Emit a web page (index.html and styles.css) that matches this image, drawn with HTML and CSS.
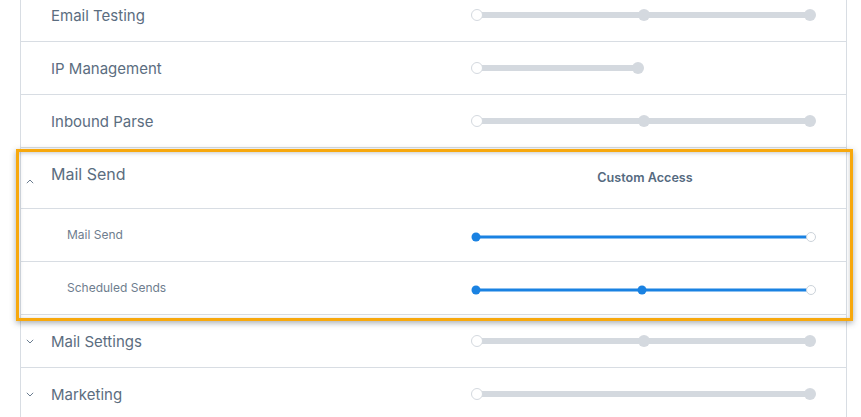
FILE: index.html
```html
<!DOCTYPE html>
<html>
<head>
<meta charset="utf-8">
<link rel="stylesheet" href="styles.css">
</head>
<body>
<div class="table">
  <div class="row">
    <span class="chev"></span>
    <span class="label">Email Testing</span>
    <svg class="slider" width="350" height="14" viewBox="0 0 350 14">
      <rect x="7" y="4" width="333" height="6" fill="#d4d9df"/>
      <circle cx="7" cy="7" r="5.5" fill="#fff" stroke="#d4d9df"/>
      <circle cx="174" cy="7" r="6" fill="#d4d9df"/>
      <circle cx="340" cy="7" r="6" fill="#d4d9df"/>
    </svg>
  </div>
  <div class="row">
    <span class="chev"></span>
    <span class="label">IP Management</span>
    <svg class="slider" width="350" height="14" viewBox="0 0 350 14">
      <rect x="7" y="4" width="161" height="6" fill="#d4d9df"/>
      <circle cx="7" cy="7" r="5.5" fill="#fff" stroke="#d4d9df"/>
      <circle cx="168" cy="7" r="6" fill="#d4d9df"/>
    </svg>
  </div>
  <div class="row">
    <span class="chev"></span>
    <span class="label">Inbound Parse</span>
    <svg class="slider" width="350" height="14" viewBox="0 0 350 14">
      <rect x="7" y="4" width="333" height="6" fill="#d4d9df"/>
      <circle cx="7" cy="7" r="5.5" fill="#fff" stroke="#d4d9df"/>
      <circle cx="174" cy="7" r="6" fill="#d4d9df"/>
      <circle cx="340" cy="7" r="6" fill="#d4d9df"/>
    </svg>
  </div>
  <div class="group">
    <div class="row head">
      <span class="chev">
        <svg width="8" height="5" viewBox="0 0 8 5"><path d="M0.8 4.2 L4 1 L7.2 4.2" fill="none" stroke="#6b7d90" stroke-width="1"/></svg>
      </span>
      <span class="label big">Mail Send</span>
      <span class="access">Custom Access</span>
    </div>
    <div class="row sub">
      <span class="chev"></span>
      <span class="label small">Mail Send</span>
      <svg class="slider" width="350" height="14" viewBox="0 0 350 14">
        <rect x="6" y="5.5" width="335" height="3" fill="#1a82e2"/>
        <circle cx="6" cy="7" r="4.5" fill="#1a82e2"/>
        <circle cx="341" cy="7" r="4.5" fill="#fff" stroke="#ccd3da"/>
      </svg>
    </div>
    <div class="row sub">
      <span class="chev"></span>
      <span class="label small">Scheduled Sends</span>
      <svg class="slider" width="350" height="14" viewBox="0 0 350 14">
        <rect x="6" y="5.5" width="335" height="3" fill="#1a82e2"/>
        <circle cx="6" cy="7" r="4.5" fill="#1a82e2"/>
        <circle cx="172" cy="7" r="4.5" fill="#1a82e2"/>
        <circle cx="341" cy="7" r="4.5" fill="#fff" stroke="#ccd3da"/>
      </svg>
    </div>
    <div class="highlight"></div>
  </div>
  <div class="row">
    <span class="chev">
      <svg width="8" height="5" viewBox="0 0 8 5"><path d="M0.8 0.8 L4 4 L7.2 0.8" fill="none" stroke="#6b7d90" stroke-width="1"/></svg>
    </span>
    <span class="label">Mail Settings</span>
    <svg class="slider" width="350" height="14" viewBox="0 0 350 14">
      <rect x="7" y="4" width="333" height="6" fill="#d4d9df"/>
      <circle cx="7" cy="7" r="5.5" fill="#fff" stroke="#d4d9df"/>
      <circle cx="174" cy="7" r="6" fill="#d4d9df"/>
      <circle cx="340" cy="7" r="6" fill="#d4d9df"/>
    </svg>
  </div>
  <div class="row">
    <span class="chev">
      <svg width="8" height="5" viewBox="0 0 8 5"><path d="M0.8 0.8 L4 4 L7.2 0.8" fill="none" stroke="#6b7d90" stroke-width="1"/></svg>
    </span>
    <span class="label">Marketing</span>
    <svg class="slider" width="350" height="14" viewBox="0 0 350 14">
      <rect x="7" y="4" width="333" height="6" fill="#d4d9df"/>
      <circle cx="7" cy="7" r="5.5" fill="#fff" stroke="#d4d9df"/>
      <circle cx="340" cy="7" r="6" fill="#d4d9df"/>
    </svg>
  </div>
</div>
</body>
</html>
```
FILE: styles.css
```css
html, body {
  margin: 0;
  padding: 0;
  background: #fff;
  overflow: hidden;
}
body {
  font-family: Inter, "Open Sans", sans-serif;
  color: #5b6d80;
}
.table {
  margin: -11px 0 0 20px;
  width: 825px;
  border-left: 1px solid #d8dde3;
  border-right: 1px solid #d8dde3;
}
.row {
  display: grid;
  grid-template-columns: 30px 419px 350px;
  align-items: center;
  height: 52px;
  border-bottom: 1px solid #d8dde3;
}
.chev {
  display: flex;
  align-items: center;
  padding-left: 5px;
}
.chev svg {
  display: block;
}
.label {
  font-size: 15px;
  line-height: 20px;
  padding-top: 2px;
  color: #5b6d80;
}
.slider {
  display: block;
}
.group {
  position: relative;
}
.row.head {
  height: 60px;
}
.head .chev {
  padding-top: 6px;
}
.label.big {
  font-size: 16px;
  padding-top: 0;
  padding-bottom: 8px;
}
.access {
  font-size: 12.6px;
  font-weight: 600;
  line-height: 20px;
  text-align: center;
  color: #556a7f;
}
.label.small {
  font-size: 12px;
  padding-top: 0;
  padding-bottom: 1px;
  padding-left: 16px;
  color: #6e7d8e;
}
.sub .slider {
  margin-top: 4px;
}
.highlight {
  position: absolute;
  left: -5px;
  top: 1px;
  right: -7px;
  bottom: -6px;
  border: 3px solid #f7a80d;
  box-shadow: 0 2px 6px rgba(60, 70, 80, 0.45), inset 0 1px 4px rgba(60, 70, 80, 0.3);
  pointer-events: none;
}
```
